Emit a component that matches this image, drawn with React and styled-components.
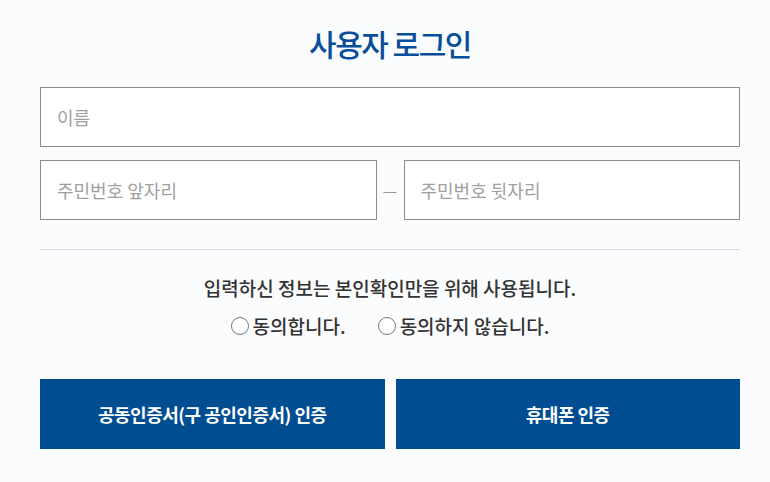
import React, { useState } from 'react';
import styled, { createGlobalStyle } from 'styled-components';

const GlobalStyle = createGlobalStyle`
  html, body {
    margin: 0;
    padding: 0;
    background: #fbfcfe;
  }
  body {
    font-family: "Noto Sans CJK KR", "Noto Sans", sans-serif;
  }
`;

const Wrapper = styled.div`
  width: 700px;
  padding: 21px 30px 0 40px;
`;

const Title = styled.h2`
  margin: 0 0 22px;
  text-align: center;
  font-size: 30px;
  font-weight: 500;
  letter-spacing: -1.5px;
  line-height: 44px;
  color: #0a4e9b;
`;

const Form = styled.div`
  display: flex;
  flex-direction: column;
  gap: 13px;
`;

const Row = styled.div`
  display: flex;
  align-items: center;
`;

const Input = styled.input`
  box-sizing: border-box;
  flex: 1;
  height: 60px;
  min-width: 0;
  padding: 0 16px;
  border: 1px solid #8c8c8c;
  background: #fff;
  font-family: inherit;
  font-size: 18px;
  color: #333;
  outline: none;

  &::placeholder {
    color: #a0a0a0;
  }
`;

const Dash = styled.span`
  width: 27px;
  text-align: center;
  color: #9a9a9a;
  font-size: 16px;
`;

const Divider = styled.hr`
  margin: 29px 0 0;
  border: 0;
  border-top: 1px solid #dcdde0;
`;

const Notice = styled.p`
  margin: 24px 0 0;
  text-align: center;
  font-size: 19px;
  font-weight: 500;
  line-height: 28px;
  color: #333;
`;

const Choices = styled.div`
  display: flex;
  justify-content: center;
  gap: 32px;
  margin-top: 10px;
`;

const Choice = styled.label`
  display: flex;
  align-items: center;
  gap: 4px;
  font-size: 19px;
  font-weight: 500;
  line-height: 28px;
  color: #333;
  cursor: pointer;
`;

const Radio = styled.input`
  appearance: none;
  margin: 0;
  width: 18px;
  height: 18px;
  border: 1px solid #777;
  border-radius: 50%;
  background: #fff;

  &:checked {
    background: radial-gradient(circle, #0a4e9b 0 4px, #fff 5px);
  }
`;

const Buttons = styled.div`
  display: grid;
  grid-template-columns: 1fr 1fr;
  gap: 11px;
  margin-top: 39px;
`;

const Button = styled.button`
  height: 70px;
  border: 0;
  background: #004d91;
  color: #fff;
  font-family: inherit;
  font-size: 18px;
  font-weight: 700;
  letter-spacing: -0.5px;
  cursor: pointer;
`;

export default function App() {
  const [agree, setAgree] = useState(null);

  return (
    <Wrapper>
      <GlobalStyle />
      <Title>사용자 로그인</Title>
      <Form>
        <Row>
          <Input placeholder="이름" />
        </Row>
        <Row>
          <Input placeholder="주민번호 앞자리" />
          <Dash>—</Dash>
          <Input placeholder="주민번호 뒷자리" />
        </Row>
      </Form>
      <Divider />
      <Notice>입력하신 정보는 본인확인만을 위해 사용됩니다.</Notice>
      <Choices>
        <Choice>
          <Radio type="radio" name="agree" checked={agree === 'yes'} onChange={() => setAgree('yes')} />
          동의합니다.
        </Choice>
        <Choice>
          <Radio type="radio" name="agree" checked={agree === 'no'} onChange={() => setAgree('no')} />
          동의하지 않습니다.
        </Choice>
      </Choices>
      <Buttons>
        <Button>공동인증서(구 공인인증서) 인증</Button>
        <Button>휴대폰 인증</Button>
      </Buttons>
    </Wrapper>
  );
}
